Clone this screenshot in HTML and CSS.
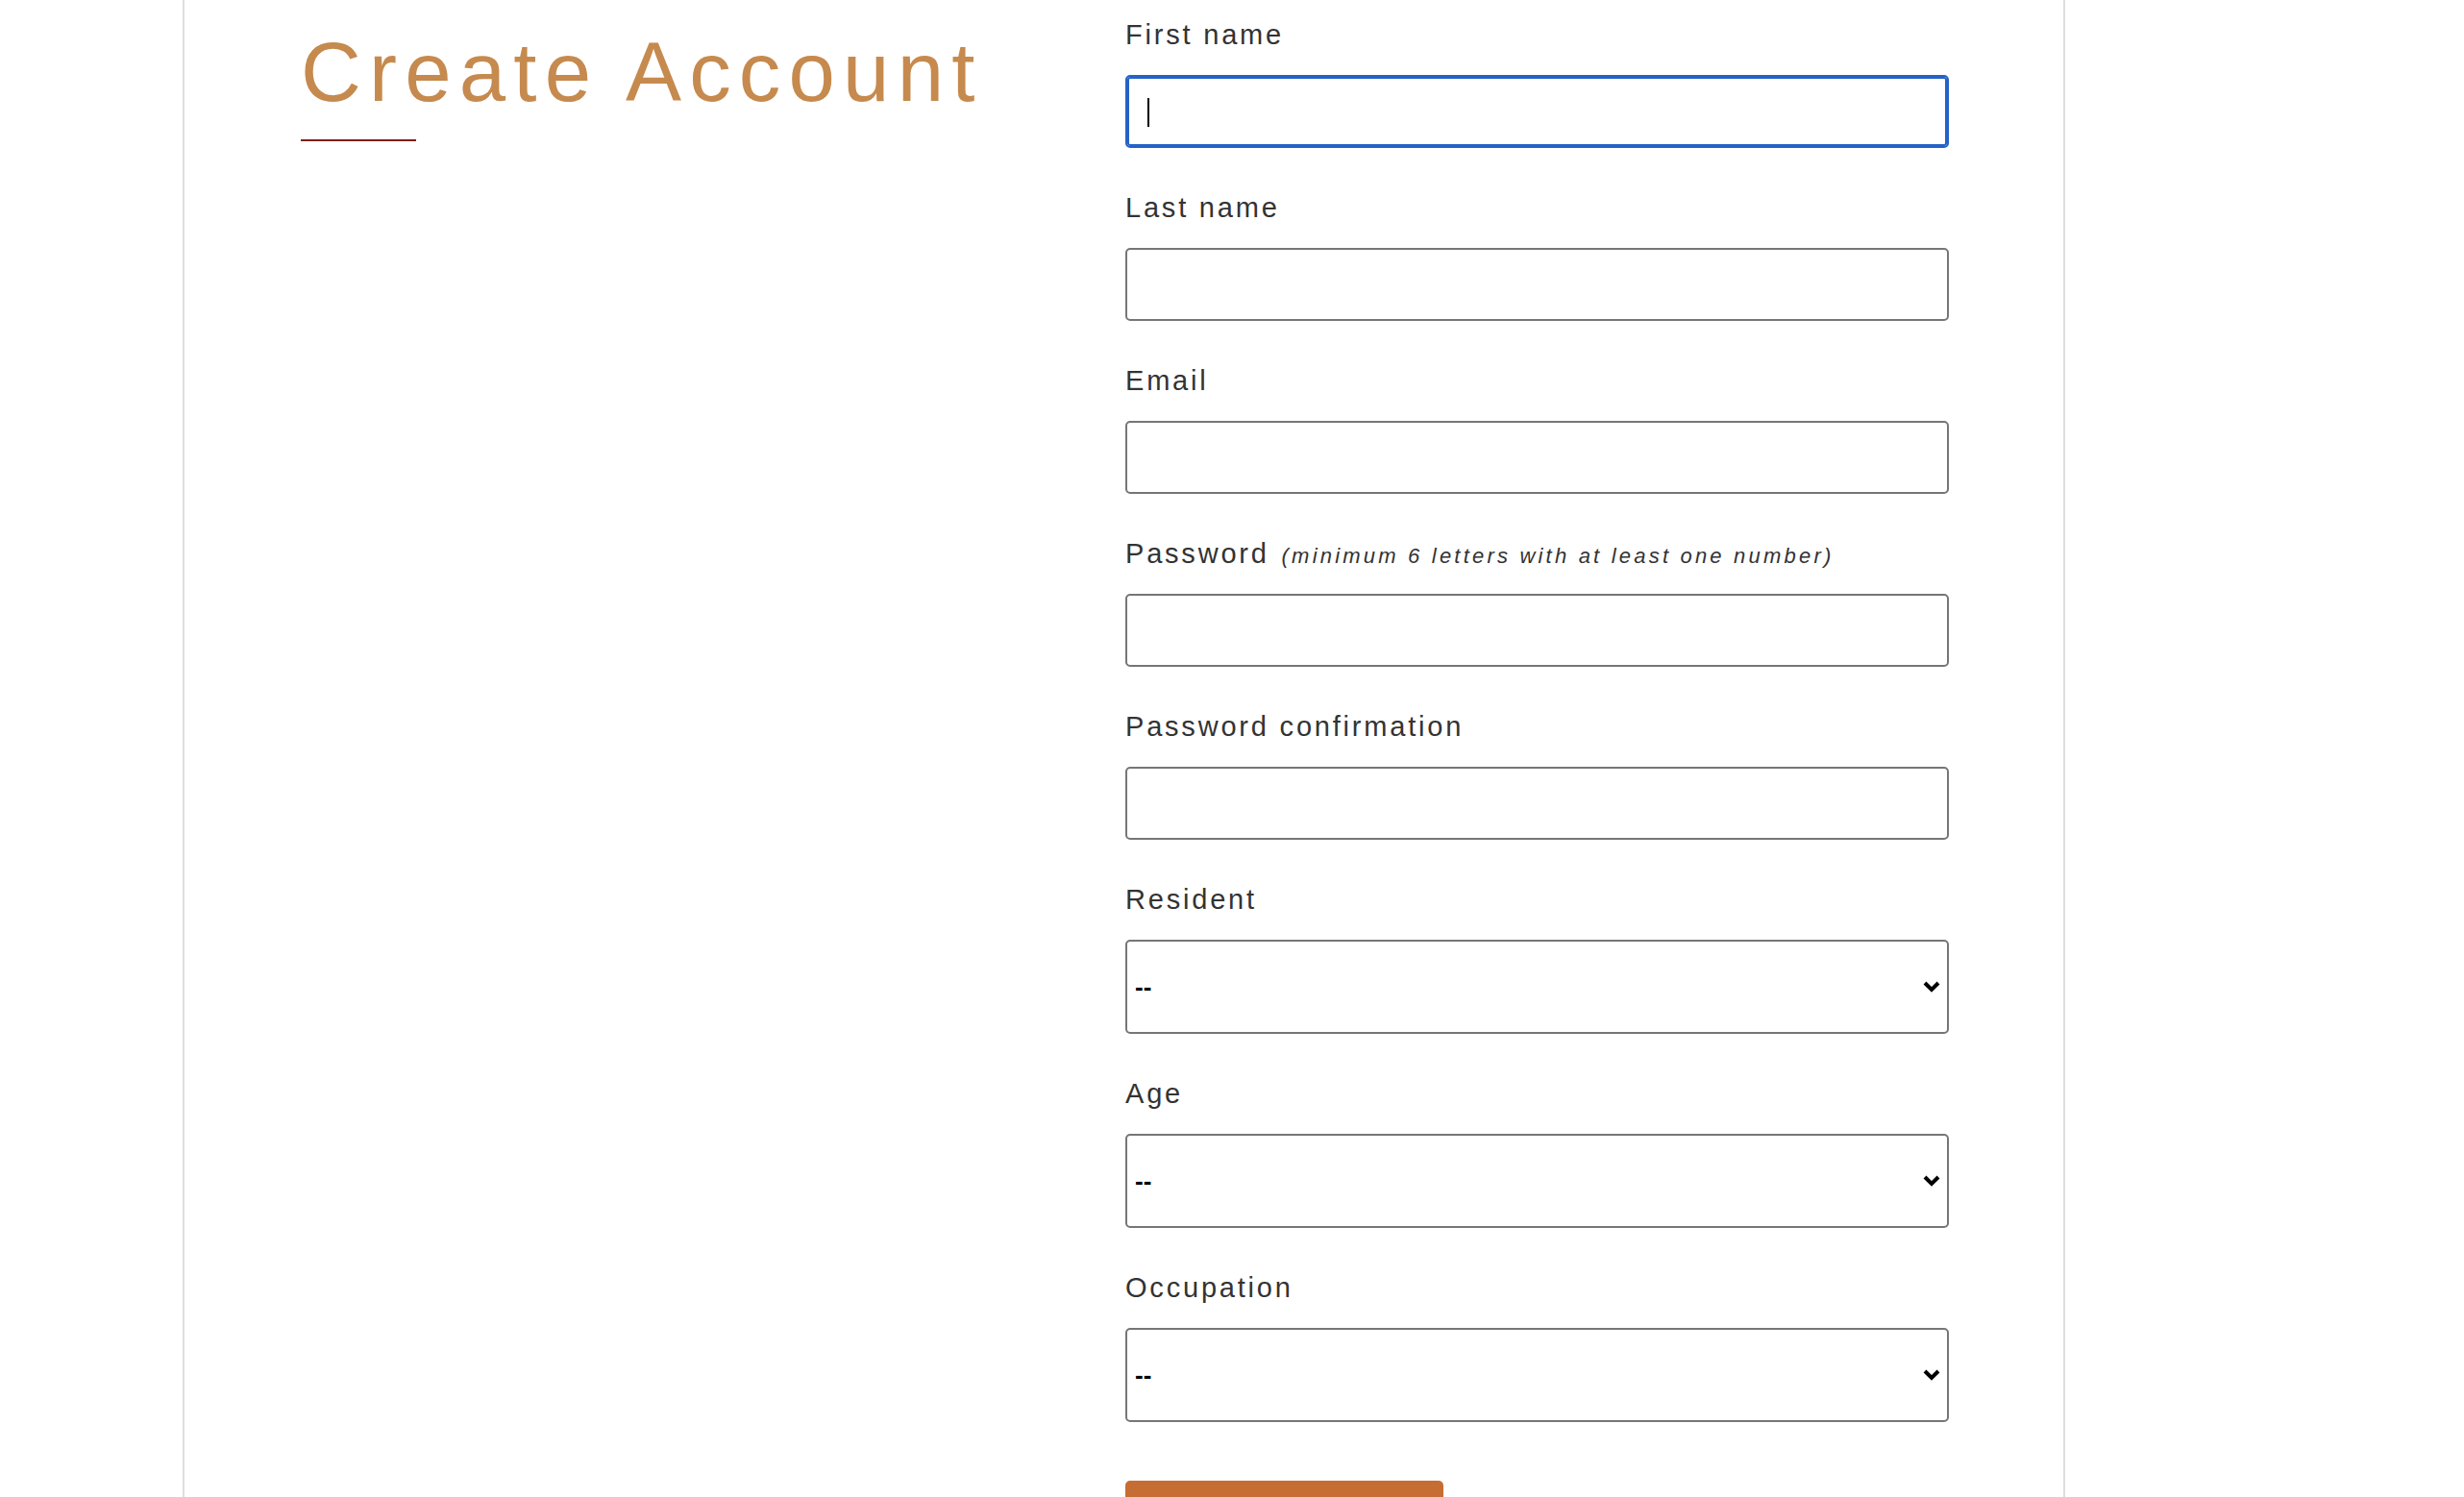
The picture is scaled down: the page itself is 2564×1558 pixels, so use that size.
FILE: index.html
```html
<!DOCTYPE html>
<html lang="en">
<head>
<meta charset="utf-8">
<title>Create Account</title>
<link rel="stylesheet" href="styles.css">
</head>
<body>
<main class="page">
  <section class="intro">
    <h1 class="title">Create Account</h1>
  </section>
  <form class="form">
    <div class="field">
      <label class="label" for="first">First name</label>
      <div class="control">
        <input class="input input-focused" id="first" type="text">
        <span class="caret"></span>
      </div>
    </div>
    <div class="field">
      <label class="label" for="last">Last name</label>
      <input class="input" id="last" type="text">
    </div>
    <div class="field">
      <label class="label" for="email">Email</label>
      <input class="input" id="email" type="email">
    </div>
    <div class="field">
      <label class="label" for="pw">Password <span class="hint">(minimum 6 letters with at least one number)</span></label>
      <input class="input" id="pw" type="password">
    </div>
    <div class="field">
      <label class="label" for="pwc">Password confirmation</label>
      <input class="input" id="pwc" type="password">
    </div>
    <div class="field">
      <label class="label" for="resident">Resident</label>
      <div class="control">
        <select class="select" id="resident"><option>--</option></select>
        <svg class="chevron" viewBox="0 0 18 12" width="18" height="12"><path d="M2 2 L9 9 L16 2" fill="none" stroke="#000" stroke-width="4"/></svg>
      </div>
    </div>
    <div class="field">
      <label class="label" for="age">Age</label>
      <div class="control">
        <select class="select" id="age"><option>--</option></select>
        <svg class="chevron" viewBox="0 0 18 12" width="18" height="12"><path d="M2 2 L9 9 L16 2" fill="none" stroke="#000" stroke-width="4"/></svg>
      </div>
    </div>
    <div class="field">
      <label class="label" for="occupation">Occupation</label>
      <div class="control">
        <select class="select" id="occupation"><option>--</option></select>
        <svg class="chevron" viewBox="0 0 18 12" width="18" height="12"><path d="M2 2 L9 9 L16 2" fill="none" stroke="#000" stroke-width="4"/></svg>
      </div>
    </div>
    <button class="submit" type="button">Create Account</button>
  </form>
</main>
</body>
</html>
```

FILE: styles.css
```css
html, body {
  margin: 0;
  padding: 0;
  background: #ffffff;
  overflow: hidden;
}

body {
  font-family: "Liberation Sans", Arial, sans-serif;
  color: #333333;
}

.page {
  margin-left: 190px;
  width: 1955px;
  min-height: 1700px;
  border-left: 2px solid #dedede;
  border-right: 2px solid #dedede;
  display: grid;
  grid-template-columns: 979px 857px;
  align-items: start;
}

.intro {
  padding-left: 121px;
  padding-top: 23px;
}

.title {
  margin: 0;
  font-size: 87px;
  line-height: 104px;
  font-weight: 400;
  letter-spacing: 8.2px;
  color: #c68a4e;
}

.title::after {
  content: "";
  display: block;
  width: 120px;
  height: 2px;
  margin-top: 18px;
  background: #7f1d14;
}

.form {
  padding-top: 16px;
  display: flex;
  flex-direction: column;
}

.field {
  display: flex;
  flex-direction: column;
  margin-bottom: 42px;
}

.label {
  display: block;
  height: 40px;
  font-size: 29px;
  line-height: 40px;
  letter-spacing: 2.8px;
  color: #333333;
  margin-bottom: 22px;
}

.hint {
  font-size: 22px;
  line-height: 1;
  font-style: italic;
  letter-spacing: 3.2px;
  margin-left: 2px;
}

.control {
  position: relative;
}

.input {
  display: block;
  box-sizing: border-box;
  width: 857px;
  height: 76px;
  margin: 0;
  border: 2px solid #767676;
  border-radius: 5px;
  background: #fff;
  font-family: "Liberation Sans", Arial, sans-serif;
  font-size: 26px;
  padding: 0 12px;
  outline: none;
}

.input-focused {
  border-color: #2562c7;
  box-shadow: inset 0 0 0 2px #2562c7;
}

.caret {
  position: absolute;
  left: 23px;
  top: 24px;
  width: 2px;
  height: 30px;
  background: #000;
}

.select {
  display: block;
  box-sizing: border-box;
  width: 857px;
  height: 98px;
  margin: 0;
  border: 2px solid #767676;
  border-radius: 5px;
  background: #fff;
  color: #000;
  font-family: "Liberation Sans", Arial, sans-serif;
  font-size: 26px;
  font-weight: 700;
  padding: 0 8px;
  -webkit-appearance: none;
  appearance: none;
  outline: none;
}

.chevron {
  position: absolute;
  right: 9px;
  top: 43px;
  pointer-events: none;
}

.submit {
  margin-top: 19px;
  width: 331px;
  height: 110px;
  padding: 40px 0 0;
  border: none;
  border-radius: 5px;
  background: #c66d33;
  color: #fff;
  font-family: "Liberation Sans", Arial, sans-serif;
  font-size: 28px;
  letter-spacing: 2px;
}
```
